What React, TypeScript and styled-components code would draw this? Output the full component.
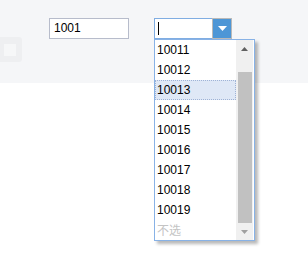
import React from "react";
import styled, { createGlobalStyle } from "styled-components";

const Global = createGlobalStyle`
  html, body { margin: 0; padding: 0; background: #ffffff; }
  body { font-family: "Liberation Sans", Arial, sans-serif; }
`;

const Page = styled.div`
  width: 308px;
  height: 261px;
  background: #ffffff;
  overflow: hidden;
`;

const TopBand = styled.div`
  height: 83px;
  background: #f5f6f8;
  display: flex;
  align-items: flex-start;
  padding-top: 18px;
  box-sizing: border-box;
`;

const Tile = styled.div`
  margin-top: 19px;
  width: 22px;
  height: 25px;
  background: #eeeff1;
  border-radius: 0 3px 3px 0;
  display: flex;
  align-items: center;
  padding-left: 4px;
  box-sizing: border-box;
`;

const TileInner = styled.div`
  width: 12px;
  height: 12px;
  background: #f6f7f8;
`;

const TextInput = styled.div`
  margin-left: 27px;
  width: 80px;
  height: 21px;
  box-sizing: border-box;
  border: 1px solid #b7bccb;
  background: #ffffff;
  font-size: 12px;
  line-height: 19px;
  padding-left: 4px;
  color: #000;
`;

const Combo = styled.div`
  position: relative;
  margin-left: 25px;
  display: flex;
  height: 21px;
`;

const ComboField = styled.div`
  width: 58px;
  height: 21px;
  box-sizing: border-box;
  border: 1px solid #80ade2;
  border-right: none;
  background: #ffffff;
  display: flex;
  align-items: center;
  padding-left: 3px;
`;

const Caret = styled.span`
  width: 1px;
  height: 13px;
  background: #000;
`;

const ArrowButton = styled.div`
  width: 20px;
  height: 21px;
  box-sizing: border-box;
  border: 1px solid #b9b9b9;
  background: #4d96d6;
  display: flex;
  align-items: center;
  justify-content: center;
`;

const Dropdown = styled.div`
  position: absolute;
  top: 21px;
  left: 0;
  width: 101px;
  height: 202px;
  box-sizing: border-box;
  border: 1px solid #88b2e6;
  background: #ffffff;
  box-shadow: 3px 3px 3px rgba(0, 0, 0, 0.28);
  display: flex;
  z-index: 10;
`;

const List = styled.div`
  flex: 1;
  display: flex;
  flex-direction: column;
`;

const Row = styled.div<{ $active?: boolean; $muted?: boolean }>`
  height: 20px;
  box-sizing: border-box;
  font-size: 12px;
  line-height: 18px;
  padding-left: 1px;
  border: 1px ${(p) => (p.$active ? "dotted #9fb3d6" : "solid transparent")};
  background: ${(p) => (p.$active ? "#dfe8f6" : "transparent")};
  color: ${(p) => (p.$muted ? "#c4c4c4" : "#000000")};
  font-family: ${(p) =>
    p.$muted
      ? '"Noto Sans CJK SC", "Liberation Sans", sans-serif'
      : '"Liberation Sans", Arial, sans-serif'};
`;

const ScrollTrack = styled.div`
  width: 17px;
  margin-right: 1px;
  background: #f0f0f0;
  display: flex;
  flex-direction: column;
  align-items: center;
`;

const ScrollBtn = styled.div`
  height: 17px;
  width: 100%;
  display: flex;
  align-items: center;
  justify-content: center;
`;

const ThumbArea = styled.div`
  flex: 1;
  width: 100%;
  display: flex;
  flex-direction: column;
  align-items: center;
  padding-top: 15px;
  box-sizing: border-box;
`;

const Thumb = styled.div`
  width: 14px;
  flex: 1;
  background: #c1c1c1;
`;

const Tri = ({ up, color, w, h }: { up?: boolean; color: string; w: number; h: number }) => (
  <svg width={w} height={h} viewBox={`0 0 ${w} ${h}`}>
    <polygon
      points={up ? `0,${h} ${w},${h} ${w / 2},0` : `0,0 ${w},0 ${w / 2},${h}`}
      fill={color}
    />
  </svg>
);

const items = ["10011", "10012", "10013", "10014", "10015", "10016", "10017", "10018", "10019"];

export default function App() {
  return (
    <Page>
      <Global />
      <TopBand>
        <Tile>
          <TileInner />
        </Tile>
        <TextInput>1001</TextInput>
        <Combo>
          <ComboField>
            <Caret />
          </ComboField>
          <ArrowButton>
            <Tri color="#ffffff" w={9} h={5} />
          </ArrowButton>
          <Dropdown>
            <List>
              {items.map((it) => (
                <Row key={it} $active={it === "10013"}>
                  {it}
                </Row>
              ))}
              <Row $muted>不选</Row>
            </List>
            <ScrollTrack>
              <ScrollBtn>
                <Tri up color="#606060" w={7} h={4} />
              </ScrollBtn>
              <ThumbArea>
                <Thumb />
              </ThumbArea>
              <ScrollBtn>
                <Tri color="#a0a0a0" w={7} h={4} />
              </ScrollBtn>
            </ScrollTrack>
          </Dropdown>
        </Combo>
      </TopBand>
    </Page>
  );
}
